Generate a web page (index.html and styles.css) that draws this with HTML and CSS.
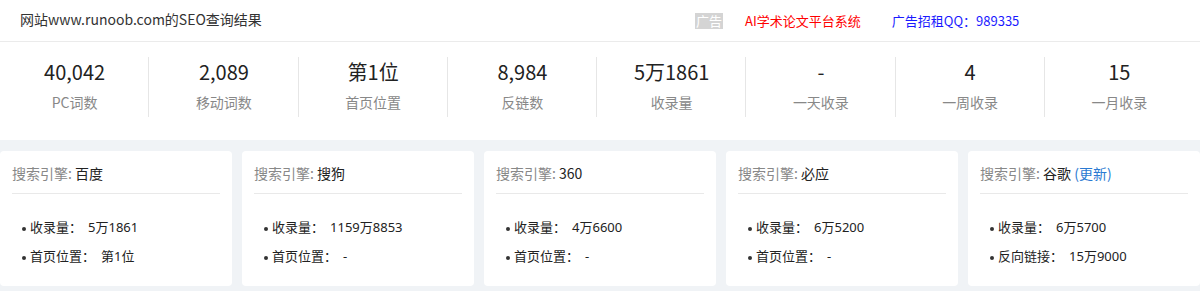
FILE: index.html
```html
<!DOCTYPE html>
<html lang="zh-CN">
<head>
<meta charset="utf-8">
<title>SEO查询结果</title>
<link rel="stylesheet" href="styles.css">
</head>
<body>
<div class="top">
  <div class="title">网站www.runoob.com的SEO查询结果</div>
  <div class="ads">
    <span class="ad-tag">广告</span>
    <a class="ad-red" href="#">AI学术论文平台系统</a>
    <a class="ad-blue" href="#">广告招租QQ：989335</a>
  </div>
</div>

<div class="stats">
  <div class="stat"><div class="num">40,042</div><div class="lbl">PC词数</div></div>
  <div class="stat"><div class="num">2,089</div><div class="lbl">移动词数</div></div>
  <div class="stat"><div class="num">第1位</div><div class="lbl">首页位置</div></div>
  <div class="stat"><div class="num">8,984</div><div class="lbl">反链数</div></div>
  <div class="stat"><div class="num">5万1861</div><div class="lbl">收录量</div></div>
  <div class="stat"><div class="num">-</div><div class="lbl">一天收录</div></div>
  <div class="stat"><div class="num">4</div><div class="lbl">一周收录</div></div>
  <div class="stat"><div class="num">15</div><div class="lbl">一月收录</div></div>
</div>

<div class="engines">
  <div class="card">
    <div class="card-head"><span class="k">搜索引擎:</span> <span class="v">百度</span></div>
    <ul class="items">
      <li>收录量：<span class="val">5万1861</span></li>
      <li>首页位置：<span class="val">第1位</span></li>
    </ul>
  </div>
  <div class="card">
    <div class="card-head"><span class="k">搜索引擎:</span> <span class="v">搜狗</span></div>
    <ul class="items">
      <li>收录量：<span class="val">1159万8853</span></li>
      <li>首页位置：<span class="val">-</span></li>
    </ul>
  </div>
  <div class="card">
    <div class="card-head"><span class="k">搜索引擎:</span> <span class="v">360</span></div>
    <ul class="items">
      <li>收录量：<span class="val">4万6600</span></li>
      <li>首页位置：<span class="val">-</span></li>
    </ul>
  </div>
  <div class="card">
    <div class="card-head"><span class="k">搜索引擎:</span> <span class="v">必应</span></div>
    <ul class="items">
      <li>收录量：<span class="val">6万5200</span></li>
      <li>首页位置：<span class="val">-</span></li>
    </ul>
  </div>
  <div class="card">
    <div class="card-head"><span class="k">搜索引擎:</span> <span class="v">谷歌</span> <a class="upd" href="#">(更新)</a></div>
    <ul class="items">
      <li>收录量：<span class="val">6万5700</span></li>
      <li>反向链接：<span class="val">15万9000</span></li>
    </ul>
  </div>
</div>
</body>
</html>
```

FILE: styles.css
```css
* { box-sizing: border-box; }
html, body {
  margin: 0;
  padding: 0;
  background: #fff;
  font-family: "Noto Sans CJK SC", "Noto Sans", sans-serif;
  color: #333;
}
a { text-decoration: none; }

.top {
  display: grid;
  grid-template-columns: 675px auto;
  align-items: center;
  height: 42px;
  padding: 0 20px 9px;
  border-bottom: 1px solid #ebebeb;
}
.title {
  font-size: 14px;
  line-height: 20px;
  color: #333;
  padding-top: 6px;
}
.ads {
  display: flex;
  align-items: center;
  font-size: 13px;
  line-height: 16px;
  padding-top: 10px;
}
.ad-tag {
  background: #d4d4d4;
  color: #fff;
  padding: 0 1px;
  height: 16px;
}
.ad-red { color: #ff0000; margin-left: 22px; }
.ad-blue { color: #1a1aff; margin-left: 31px; }

.stats {
  display: grid;
  grid-template-columns: repeat(8, 1fr);
  padding: 15px 6px 23px 0;
  background: #fff;
  border-radius: 0 0 4px 4px;
}
.stat {
  height: 60px;
  text-align: center;
  border-left: 1px solid #e6e6e6;
  margin-left: -1px;
}
.stat:first-child { border-left: 0; margin-left: 0; }
.num {
  font-size: 20px;
  line-height: 30px;
  color: #222;
}
.lbl {
  font-size: 14px;
  line-height: 30px;
  color: #888;
}

.engines {
  display: grid;
  grid-template-columns: repeat(5, 1fr);
  gap: 10px;
  background: #f0f3f6;
  padding: 11px 0 5px;
}
.card {
  background: #fff;
  border-radius: 4px;
  padding: 12px 12px 15px;
}
.card-head {
  font-size: 14px;
  line-height: 20px;
  padding-bottom: 10px;
  border-bottom: 1px solid #e9e9e9;
}
.card-head .k { color: #888; }
.card-head .v { color: #222; }
.upd { color: #2a7ad2; }
.items {
  list-style: none;
  margin: 19px 0 0;
  padding: 0 0 0 10px;
  font-family: "Noto Sans", "Noto Sans CJK SC", sans-serif;
  font-size: 13px;
  line-height: 29px;
  color: #222;
}
.items li {
  display: flex;
  align-items: center;
}
.items li::before {
  content: "";
  width: 4px;
  height: 4px;
  border-radius: 50%;
  background: #333;
  margin: 2px 4px 0 0;
}
.val { margin-left: 6px; }
```
